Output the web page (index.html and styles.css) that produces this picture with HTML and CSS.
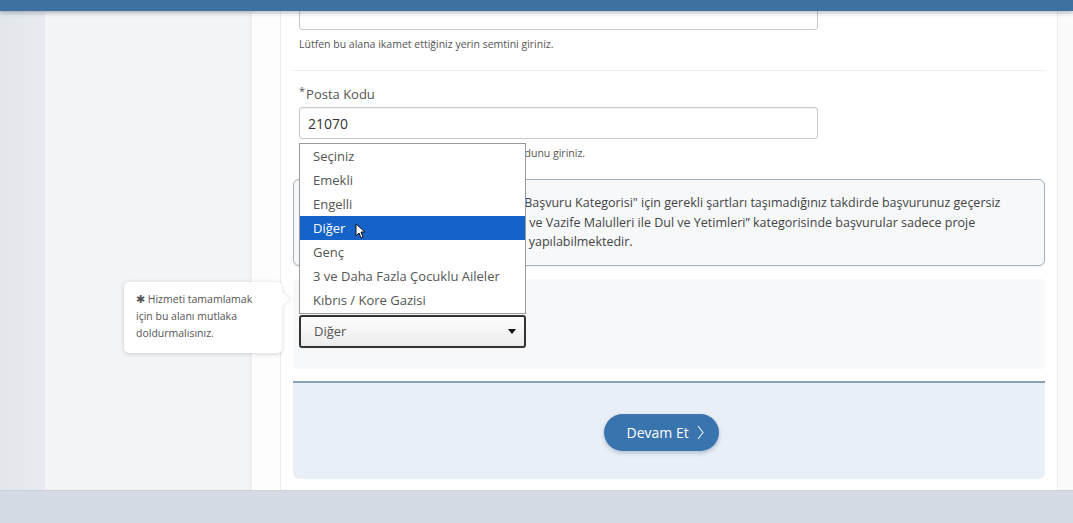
FILE: index.html
```html
<!DOCTYPE html>
<html lang="tr">
<head>
    <meta charset="UTF-8">
    <meta name="viewport" content="width=device-width, initial-scale=1.0">
    <title>Başvuru Formu</title>
    <link rel="stylesheet" href="styles.css">
</head>
<body>

    <div class="topbar"></div>

    <div class="layout">
        <div class="rail"></div>
        <aside class="sidebar"></aside>
        <div class="gutter"></div>

        <main class="panel">
            <div class="field first">
                <input type="text" class="text-input" name="semt">
                <p class="help">Lütfen bu alana ikamet ettiğiniz yerin semtini giriniz.</p>
            </div>

            <hr class="divider">

            <div class="field">
                <label for="posta" class="label"><span class="req">*</span>Posta Kodu</label>
                <input type="text" class="text-input" id="posta" name="posta" value="21070">
                <p class="help">Lütfen bu alana ikamet ettiğiniz yerin posta kodunu giriniz.</p>
            </div>

            <div class="info">
                <span class="line">Bu alanda seçtiğiniz kategori ile ilgili "Başvuru Kategorisi" için gerekli şartları taşımadığınız takdirde başvurunuz geçersiz</span>
                <span class="line">sayılacaktır. Öte "Şehit Yakınları, Harp ve Vazife Malulleri ile Dul ve Yetimleri” kategorisinde başvurular sadece proje</span>
                <span class="line">koordinatörlüğü ve il ofisleri üzerinde yapılabilmektedir.</span>
            </div>

            <div class="category">
                <label class="label"><span class="req">*</span>Başvuru Kategorisi</label>
                <div class="select-wrap">
                    <ul class="options">
                        <li>Seçiniz</li>
                        <li>Emekli</li>
                        <li>Engelli</li>
                        <li class="active">Diğer
                            <svg class="cursor" width="10" height="16" viewBox="0 0 10 16">
                                <path d="M1 1 L1 13 L4 10 L6 15 L8 14 L6 9 L10 9 Z" fill="#fff" stroke="#111" stroke-width="1"/>
                            </svg>
                        </li>
                        <li>Genç</li>
                        <li>3 ve Daha Fazla Çocuklu Aileler</li>
                        <li>Kıbrıs / Kore Gazisi</li>
                    </ul>
                    <div class="select">
                        <span>Diğer</span>
                        <span class="caret"></span>
                    </div>
                </div>

                <div class="tooltip">
                    ✱ Hizmeti tamamlamak için bu alanı mutlaka doldurmalısınız.
                </div>
            </div>

            <div class="actions">
                <button class="btn">Devam Et
                    <svg class="chev" width="7" height="15" viewBox="0 0 7 15">
                        <path d="M1 1 L6 7.5 L1 14" fill="none" stroke="#dfe9f4" stroke-width="1.2"/>
                    </svg>
                </button>
            </div>
        </main>

        <div class="edge"></div>
    </div>

    <div class="bottom"></div>

</body>
</html>
```

FILE: styles.css
```css
* {
    box-sizing: border-box;
}

body {
    margin: 0;
    width: 1073px;
    height: 523px;
    overflow: hidden;
    font-family: "Open Sans", "Liberation Sans", sans-serif;
    color: #444;
    background: #fff;
}

.topbar {
    position: relative;
    z-index: 5;
    height: 11px;
    background: #3e70a0;
    box-shadow: 0 2px 4px rgba(40, 60, 90, 0.35);
}

.layout {
    display: flex;
    height: 479px;
}

.rail {
    width: 45px;
    background: linear-gradient(to right, #e2e6eb, #e8ebef);
}

.sidebar {
    width: 207px;
    background: #f3f4f6;
    box-shadow: inset -2px 0 3px rgba(0, 0, 0, 0.03);
}

.gutter {
    width: 28px;
    background: #fdfdfd;
}

.panel {
    width: 778px;
    padding: 0 12px;
    background: #fff;
    border-left: 1px solid #ececec;
    border-right: 1px solid #ececec;
}

.edge {
    flex: 1;
    background: #fbfbfb;
}

.bottom {
    position: relative;
    z-index: 5;
    height: 33px;
    background: #d5dbe4;
    border-top: 1px solid #c9d0da;
}

.field {
    padding: 0 6px;
}

.field.first .text-input {
    margin-top: -14px;
    height: 33px;
}

.text-input {
    display: block;
    width: 519px;
    height: 32px;
    padding: 0 8px;
    border: 1px solid #c8c8c8;
    border-radius: 3px;
    font-family: inherit;
    font-size: 14px;
    color: #333;
    box-shadow: inset 0 1px 1px rgba(0, 0, 0, 0.05);
}

.help {
    margin: 7px 0 0;
    font-size: 10.5px;
    line-height: 14px;
    color: #555;
}

.divider {
    margin: 19px 0 0;
    border: 0;
    border-top: 1px solid #eeeeee;
}

.label {
    display: block;
    height: 18px;
    margin: 14px 0 4px;
    font-size: 13px;
    line-height: 18px;
    color: #555;
}

.req {
    font-size: 11px;
    line-height: 1;
    vertical-align: top;
    margin-right: 1px;
}

.info {
    margin-top: 19px;
    padding: 13px 14px;
    background: #f6f8fa;
    border: 1px solid #a3b1c0;
    border-radius: 6px;
    font-size: 12.5px;
    line-height: 19.5px;
    color: #444;
    box-shadow: 0 1px 2px rgba(0, 0, 0, 0.08);
}

.info .line {
    display: block;
    white-space: nowrap;
}

.category {
    position: relative;
    margin-top: 13px;
    height: 90px;
    padding: 11px 6px 0;
    background: #f7f8fa;
    border-radius: 4px;
}

.category .label {
    margin: 0 0 7px;
}

.select-wrap {
    position: relative;
    width: 227px;
}

.select {
    display: flex;
    align-items: center;
    justify-content: space-between;
    height: 33px;
    padding: 0 8px 0 13px;
    border: 2px solid #333;
    border-radius: 3px;
    background: linear-gradient(#fdfdfd, #ececec);
    font-size: 13px;
    color: #555;
}

.caret {
    width: 0;
    height: 0;
    border-left: 4px solid transparent;
    border-right: 4px solid transparent;
    border-top: 5px solid #111;
}

.options {
    position: absolute;
    bottom: 100%;
    left: 0;
    width: 227px;
    margin: 0 0 1px;
    padding: 0 0 1px;
    list-style: none;
    background: #fff;
    border: 1px solid #9a9a9a;
    z-index: 3;
}

.options li {
    position: relative;
    height: 24px;
    padding-left: 13px;
    font-size: 13px;
    line-height: 24px;
    color: #555;
}

.options li.active {
    background: #1562c9;
    color: #fff;
}

.cursor {
    position: absolute;
    left: 55px;
    top: 7px;
}

.tooltip {
    position: absolute;
    left: -169px;
    top: 3px;
    width: 158px;
    height: 71px;
    padding: 9px 12px;
    background: #fff;
    border-radius: 5px;
    font-size: 10.5px;
    line-height: 17px;
    color: #555;
    box-shadow: 0 1px 5px rgba(0, 0, 0, 0.16);
    z-index: 2;
}

.tooltip::after {
    content: "";
    position: absolute;
    right: -5px;
    top: 12px;
    width: 10px;
    height: 10px;
    background: #fff;
    transform: rotate(45deg);
    box-shadow: 2px -2px 3px rgba(0, 0, 0, 0.06);
}

.actions {
    display: flex;
    justify-content: center;
    margin-top: 12px;
    height: 98px;
    padding: 31px 16px 0 0;
    background: #e9eff6;
    border-top: 2px solid #8aa1b8;
    border-radius: 0 0 6px 6px;
}

.btn {
    display: flex;
    align-items: center;
    gap: 8px;
    width: 115px;
    height: 37px;
    padding: 0 0 0 23px;
    border: 0;
    border-radius: 19px;
    background: #3a74ae;
    color: #fff;
    font-family: inherit;
    font-size: 14px;
    font-weight: 500;
    box-shadow: 0 2px 4px rgba(40, 80, 130, 0.3);
}
```
